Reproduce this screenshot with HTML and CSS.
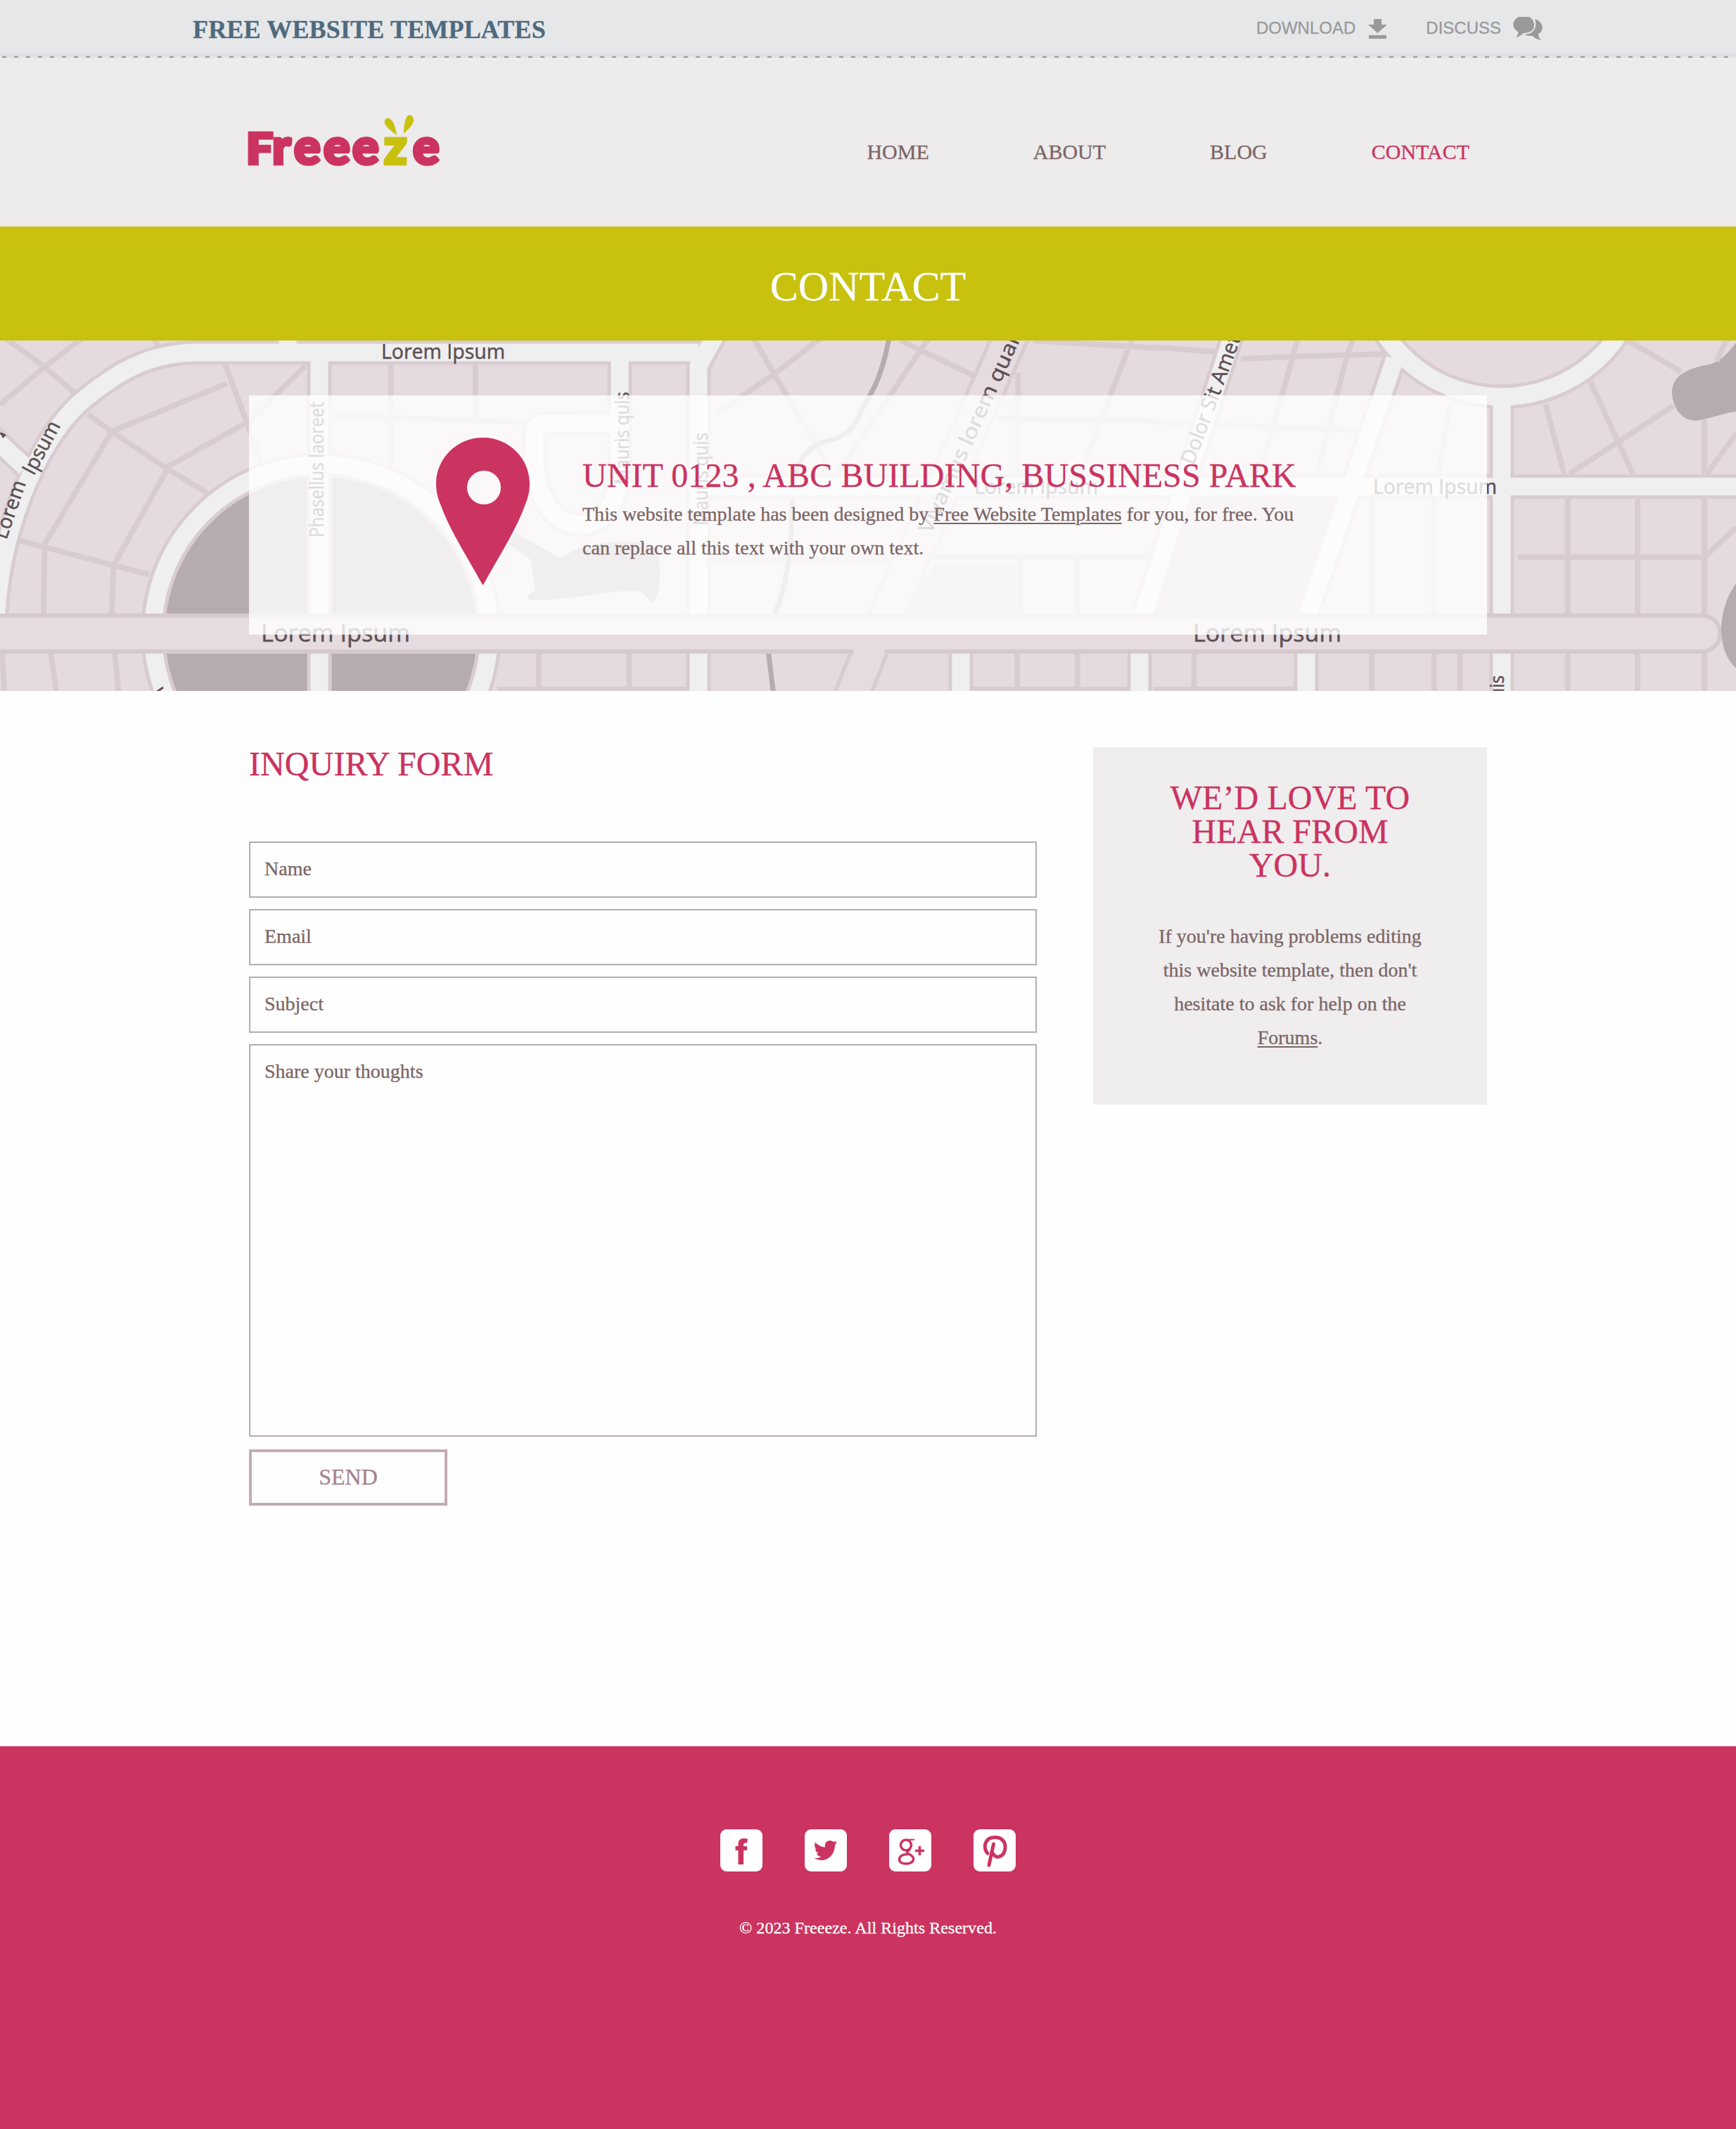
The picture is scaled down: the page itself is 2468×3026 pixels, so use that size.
FILE: index.html
```html
<!DOCTYPE html>
<html lang="en">
<head>
<meta charset="utf-8">
<title>Contact - Freeeze</title>
<link rel="stylesheet" href="styles.css">
</head>
<body>
<div class="topbar">
  <a class="topbar-title">FREE WEBSITE TEMPLATES</a>
  <div class="topbar-links">
    <a class="topbar-link">DOWNLOAD
      <svg class="icon-download" viewBox="0 0 27 28" width="27" height="28"><path d="M8 0h11v8h8L13.500 20 0 8h8zM1 23h25v5H1z"/></svg>
    </a>
    <a class="topbar-link">DISCUSS
      <svg class="icon-discuss" viewBox="0 0 43 34" width="43" height="34"><path d="M8 0h15C28 3 30 7 30 12c0 7-6 11-15 11-2 2-6 5-11 6 3-3 4-5 3-8C-2 16-2 5 8 0z"/><path d="M31 3c10 3 14 13 8 19 0 0-3 2-3 2 0 4 1 6 4 9-6-1-10-3-12-6-5 0-9 0-12-2C27 25 36 17 31 3z"/></svg>
    </a>
  </div>
</div>

<header class="header">
  <div class="container header-row">
    <svg class="logo" viewBox="0 0 280 80" width="280" height="80">
      <text class="logo-pink logo-cap" x="-2" y="70" textLength="38" lengthAdjust="spacingAndGlyphs">F</text>
      <text class="logo-pink" x="35 66 108 149" y="70">reee</text>
      <text class="logo-green" x="194" y="70">z</text>
      <text class="logo-pink" x="235" y="70">e</text>
      <path class="logo-leaf" d="M212 29C210 15 206 7 201 5c-4-1-7 2-6 7 2 6 9 11 17 17zM222 27c0-13 2-22 6-26 4-2 9 2 8 8-2 7-8 12-14 18z"/>
    </svg>
    <nav class="nav">
      <a>HOME</a><a>ABOUT</a><a>BLOG</a><a class="active">CONTACT</a>
    </nav>
  </div>
</header>

<h1 class="banner">CONTACT</h1>

<section class="map">
  <svg class="map-art" viewBox="0 0 2468 498" width="2468" height="498" aria-hidden="true">
    <defs>
      <g id="ways">
        <path d="M993 17H280C212 17 165 45 113 89 55 142-6 272-6 420M-22 126L36 180M409-10V17M454 17V500"/>
        <circle cx="456.500" cy="415.500" r="239"/>
        <path d="M881 17V170C881 235 855 262 825 262 790 262 760 225 760 165V132Q760 118 774 118H881"/>
        <path d="M1024-20L993 36V510M993 207.500H2480"/>
        <path d="M1753-10L1626 388M1983 26L1860 388"/>
        <circle cx="2135" cy="-120" r="200"/>
        <path d="M2135 80V510M1366 420V510M1620 420V510M1857 420V510"/>
      </g>
      <path id="avenue" d="M1441-15L1254 405M1241 430L1209 510"/>
    </defs>

    <g class="dark">
      <circle cx="456.500" cy="415.500" r="230"/>
      <path d="M733 273L795 309 828 293Q900 278 933 293Q945 345 929 373C918 367 918 356 899 356C860 356 820 368 760 369Q740 369 761 354L754 311 723 289z"/>
      <path d="M2468 3C2455 20 2445 30 2430 34 2395 40 2377 52 2377 74 2378 95 2390 113 2410 114 2430 112 2445 104 2468 101z"/>
    </g>
    <path class="block" d="M1331 316H1450V388H1282zM1692 220H1905L1848 388H1640z"/>

    <g class="streets">
      <g transform="translate(0 -14) scale(.5293 .33333)">
        <path d="M15 32L120 155 200 265M220 32L120 155 0 315M415 32L425 70M605 145L665 400 700 555M820 150L665 390 450 580M610 225L300 430M235 355L300 430 450 590 555 690M300 430L120 910 117 1210M450 590L305 1000 300 1210M40 890L400 1040M1050 145V580M1277 145V385M890 362L1410 390M5 1370L12 1540M135 1370L152 1540M308 1370L318 1540M1447 1370V1540M1335 1530H1568"/>
      </g>
      <g transform="translate(820 -14) scale(.5293 .33333)">
        <path d="M475 32L530 185 670 560M655 32L530 185 370 360M945 32L700 610M870 42L1070 195M1225 42L1568 75M1492 32L1350 620M1185 180V620M1130 375L1568 385M0 350H90M360 975H870M960 965H1540M1190 965V1210M1345 965V1210M140 1370V1540M1183 1370V1540M1345 1370V1540M0 1530H300M1060 1530H1490"/>
      </g>
      <g transform="translate(1640 -14) scale(.5281 .33333)">
        <path d="M0 70L165 90M235 120L375 110 620 100M388 32L375 110 285 610M538 32L520 110 440 610M0 390L550 425M800 310L765 610M587 710V1540M755 710V1540M825 1370V1540M109 1370V1540M0 1530H385M1280 45L1420 175M1175 215L1290 610M1055 315L1105 610M1400 320L1120 610M1483 380V610M1568 440L1490 610M1115 710V1540M1303 710V1540M1483 710V1540M980 965H1483L1568 840M1545 32L1515 130"/>
      </g>
    </g>
    <path class="river" d="M1264-4C1255 45 1243 70 1228 92 1212 135 1195 138 1170 144 1140 157 1130 175 1127 226 1125 290 1120 350 1101 388M1092 440L1100 505"/>

    <use href="#avenue" class="avenue-edge"/>
    <use href="#ways" class="way-edge"/>
    <use href="#avenue" class="avenue-fill"/>
    <use href="#ways" class="way-fill"/>
    <path class="boulevard" d="M-20 391H2420A25 25 0 0 1 2420 442H-20z"/>
    <path class="avenue-gap" d="M1214 442H1258"/>
    <path class="dark" d="M2468 345C2440 385 2440 440 2468 466z"/>

    <g class="labels">
      <text x="542" y="25.500" textLength="176" lengthAdjust="spacingAndGlyphs">Lorem Ipsum</text>
      <text x="1385" y="217.500" textLength="176" lengthAdjust="spacingAndGlyphs">Lorem Ipsum</text>
      <text x="1952" y="217.500" textLength="176" lengthAdjust="spacingAndGlyphs">Lorem Ipsum</text>
      <text class="big" x="371" y="427.500" textLength="212" lengthAdjust="spacingAndGlyphs">Lorem Ipsum</text>
      <text class="big" x="1696" y="427.500" textLength="211" lengthAdjust="spacingAndGlyphs">Lorem Ipsum</text>
      <text class="small" transform="translate(459.500 280) rotate(-90)" textLength="193" lengthAdjust="spacingAndGlyphs">Phasellus laoreet</text>
      <text class="small" transform="translate(894 205) rotate(-90)" textLength="132" lengthAdjust="spacingAndGlyphs">Mauris quis</text>
      <text class="small" transform="translate(1006 263) rotate(-90)" textLength="132" lengthAdjust="spacingAndGlyphs">Mauris quis</text>
      <text class="small" transform="translate(2138 608) rotate(-90)" textLength="132" lengthAdjust="spacingAndGlyphs">Mauris quis</text>
      <text transform="translate(1324 276) rotate(-65.500)" textLength="325" lengthAdjust="spacingAndGlyphs">Vivamus lorem quam</text>
      <text transform="translate(1697 178) rotate(-69.700)" textLength="193" lengthAdjust="spacingAndGlyphs">Dolor Sit Amet</text>
      <text transform="translate(9 284) rotate(-71)" textLength="86" lengthAdjust="spacingAndGlyphs">Lorem</text>
      <text transform="translate(48 193) rotate(-62)" textLength="82" lengthAdjust="spacingAndGlyphs">Ipsum</text>
      <path d="M0 132l8 3M2 131l3 7M222 500l10-7"/>
    </g>
  </svg>
  <div class="container">
    <div class="address">
      <svg class="pin" viewBox="0 0 133 210" width="133" height="210"><path fill-rule="evenodd" d="M66.500 0C29 0 0 30 0 66c0 12 3 21 7 31 14 38 40 77 59.500 113C86 174 112 135 126 97c4-10 7-19 7-31C133 30 104 0 66.500 0zM68 47a24 24 0 1 1 0 48 24 24 0 1 1 0-48z"/></svg>
      <div class="address-text">
        <h2>UNIT 0123 , ABC BUILDING, BUSSINESS PARK</h2>
        <p>This website template has been designed by <a>Free Website Templates</a> for you, for free. You can replace all this text with your own text.</p>
      </div>
    </div>
  </div>
</section>

<main class="container main">
  <form class="form">
    <h2>INQUIRY FORM</h2>
    <input class="field" type="text" value="Name">
    <input class="field" type="text" value="Email">
    <input class="field" type="text" value="Subject">
    <textarea class="field field-area">Share your thoughts</textarea>
    <button class="send" type="button">SEND</button>
  </form>
  <aside class="aside">
    <h2>WE’D LOVE TO HEAR FROM YOU.</h2>
    <p>If you're having problems editing this website template, then don't hesitate to ask for help on the <a>Forums</a>.</p>
  </aside>
</main>

<footer class="footer">
  <div class="social">
    <a><svg viewBox="0 0 60 60" width="60" height="60"><rect width="60" height="60" rx="9"/><path d="M25.500 50V30H21.500v-6h4v-3c0-5.500 3-8 8-8 2 0 4 .2 5.500.8L38 19.500c-3-.5-5 0-5 3V24h5v6h-5v20z"/></svg></a>
    <a><svg viewBox="0 0 60 60" width="60" height="60"><rect width="60" height="60" rx="9"/><path d="M46 18c-1 2-2 3-3 4 0 12-8 22-19 22-4 0-7-1-10-3 4 0 7 0 9-2-3-.5-5-2-6-5h3c-3-1-5-3-5-6l2 .5c-3-2-3.500-6-2-10 4 4 8 6.500 14 7-1-6 2-9.500 7-9.500 2 0 4 1 5 2l4-1.500c-.5 1.500-1 2-2 3z"/></svg></a>
    <a><svg viewBox="0 0 60 60" width="60" height="60"><rect width="60" height="60" rx="9"/><path class="line thin" d="M36 14.700H26"/><ellipse class="line" cx="24" cy="22.500" rx="7.500" ry="7.500"/><path class="line" d="M30 28c-4 3-6 5-2 7 4 2 7 4 6.500 8-1 8-20 8-20 0 0-6 7-8 13-7.500M37 30.500h13M43.500 24v13"/></svg></a>
    <a><svg viewBox="0 0 60 60" width="60" height="60"><rect width="60" height="60" rx="9"/><path class="line pinterest" d="M20 34C14 28 14 12 30 11.500 40 11 46 18 45 27c-1 12-13 16-17 8M28.500 21L22 51"/></svg></a>
  </div>
  <p class="copyright">© 2023 Freeeze. All Rights Reserved.</p>
</footer>
</body>
</html>
```
FILE: styles.css
```css
* { box-sizing: border-box; }
body {
  margin: 0;
  background: #fefefe;
  color: #7b6565;
  font: 28px/48px "Liberation Serif", "Times New Roman", serif;
  -webkit-text-stroke: .3px;
}
h1, h2, p { margin: 0; font-weight: 400; }
h2 { color: #cb3360; font-size: 48px; line-height: 48px; letter-spacing: .1px; }
.container { width: 1760px; margin: 0 auto; }

.topbar {
  position: relative;
  height: 82px;
  padding: 0 274px;
  display: flex;
  justify-content: space-between;
  background: linear-gradient(#e5e7e9 74px, #d9dbdc 79px, #e4e4e4 80px);
}
.topbar::after {
  content: "";
  position: absolute;
  left: 0;
  right: 0;
  bottom: 0;
  height: 2px;
  background: repeating-linear-gradient(90deg, #e4e3e3 0 3px, #999 3px 9px, #e4e3e3 9px 17px);
}
.topbar-title { font-weight: 700; font-size: 36px; line-height: 84px; letter-spacing: .17px; color: #4f6a7d; }
.topbar-links { display: flex; gap: 55px; color: #999; fill: #999; font: 24px/80px "Liberation Sans", Arial, sans-serif; }
.topbar-link { display: flex; align-items: flex-start; }
.icon-download { margin: 27px 0 0 18px; }
.icon-discuss { margin: 24px 0 0 17px; }

.header { height: 240px; background: #edebeb; }
.header-row { display: flex; justify-content: space-between; }
.logo { margin: 81px 0 0 -2px; overflow: visible; font: 900 70px Lato, sans-serif; }
.logo-cap { font-size: 61px; }
.logo-pink { fill: #cb3360; stroke: #cb3360; stroke-width: 4.6; }
.logo-green { fill: #c8c10e; stroke: #c8c10e; stroke-width: 4.6; }
.logo-leaf { fill: #c8c10e; }
.nav { display: flex; gap: 148px; padding: 110px 25px 0 0; font-size: 30px; line-height: 48px; }
.nav .active { color: #cb3360; }

.banner {
  height: 162px;
  background: #c8c10e;
  color: #fff;
  font-size: 60px;
  line-height: 171px;
  text-align: center;
}

.map { position: relative; height: 498px; padding-top: 78px; overflow: hidden; background: #e5dbdf; }
.map-art { position: absolute; left: 0; top: 0; }
.dark { fill: #b6acb0; }
.block { fill: #d5ced1; }
.streets path { fill: none; stroke: #d8ccd1; stroke-width: 8; vector-effect: non-scaling-stroke; }
.river { fill: none; stroke: #b6acb0; stroke-width: 7; }
.way-edge { fill: none; stroke: #d8ccd1; stroke-width: 35; }
.way-fill { fill: none; stroke: #efefef; stroke-width: 25; }
.avenue-edge { fill: none; stroke: #d8ccd1; stroke-width: 54; }
.avenue-fill { fill: none; stroke: #e6dce0; stroke-width: 43; }
.boulevard { fill: #e6dce0; stroke: #d5c9ce; stroke-width: 6; }
.avenue-gap { stroke: #e6dce0; stroke-width: 8; }
.labels { fill: #5c4f54; stroke: #5c4f54; stroke-width: .5px; font: 29px "Open Sans", "Noto Sans", sans-serif; }
.labels .big { font-size: 35px; }
.labels .small { font-size: 27px; }
.labels path { stroke-width: 3; }
.address {
  position: relative;
  height: 340px;
  display: flex;
  padding: 60px 0 0 266px;
  background: rgba(255, 255, 255, .8);
}
.pin { flex: none; fill: #cb3360; }
.address-text { width: 1040px; margin: 30px 0 0 75px; }
.address-text p { margin-top: 7px; letter-spacing: .02px; }
p a { text-decoration: underline; text-decoration-thickness: 2px; text-underline-offset: 3px; }

.main { display: flex; justify-content: space-between; align-items: flex-start; height: 1500px; padding-top: 80px; }
.form { width: 1120px; display: flex; flex-direction: column; }
.form h2 { margin-bottom: 86px; }
.field {
  display: block;
  width: 100%;
  height: 80px;
  margin: 0 0 16px;
  padding: 0 20px 3px;
  border: 2px solid #b6acb0;
  border-radius: 0;
  background: #fefefe;
  color: inherit;
  font: 28px/32px "Liberation Serif", "Times New Roman", serif;
}
.field-area { height: 558px; padding-top: 21px; margin-bottom: 18px; resize: none; }
.send {
  width: 282px;
  height: 80px;
  padding: 0 0 2px;
  border: 4px solid #c5abb3;
  background: #fefefe;
  color: #a6828d;
  font: 32px/70px "Liberation Serif", "Times New Roman", serif;
}
.aside { width: 560px; height: 508px; padding: 48px 84px 0; background: #efedee; text-align: center; }
.aside h2 { margin-bottom: 53px; }

.footer { height: 544px; padding-top: 118px; background: #cb3360; color: #fff; text-align: center; }
.social { display: flex; justify-content: center; gap: 60px; margin-bottom: 56px; }
.social svg { display: block; fill: #cb3360; }
.social rect { fill: #fff; }
.social .line { fill: none; stroke: #cb3360; stroke-width: 3.5; }
.social .thin { stroke-width: 2; }
.social .pinterest { stroke-width: 5; stroke-linecap: round; }
.copyright { font-size: 24px; letter-spacing: .05px; }
```
